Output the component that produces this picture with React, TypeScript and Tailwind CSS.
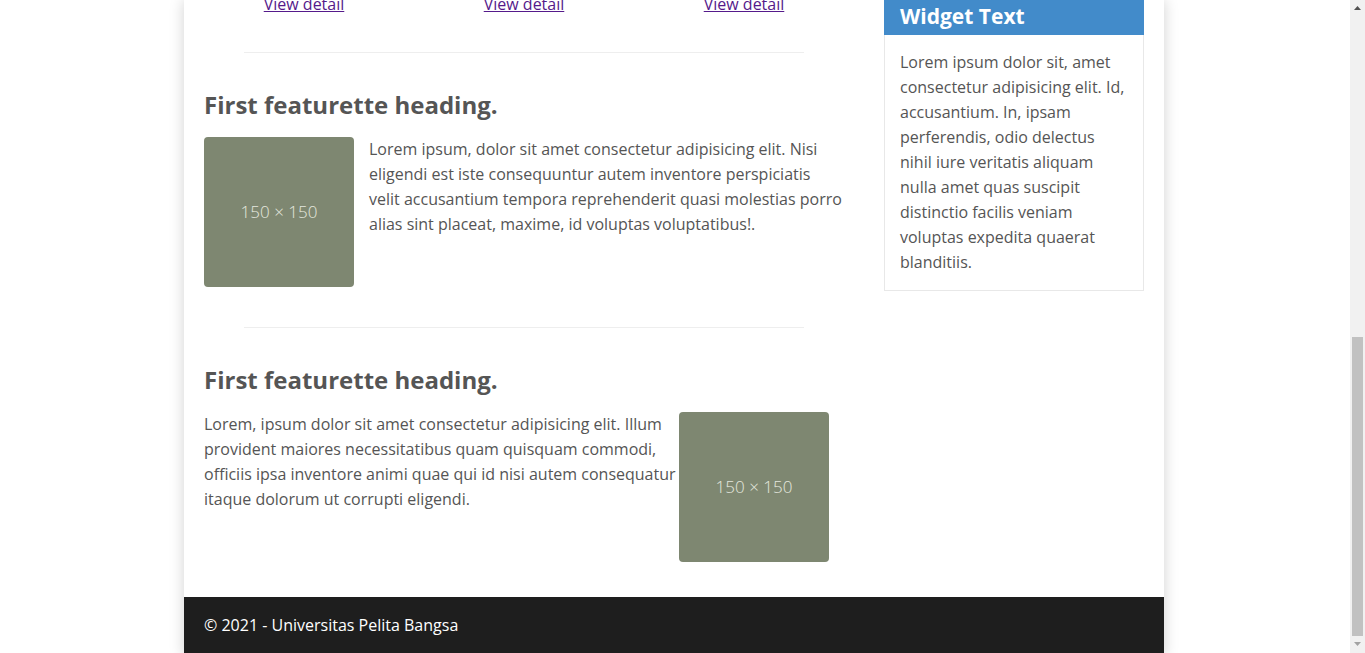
import React from "react";

const features = [
  {
    text: "Lorem ipsum, dolor sit amet consectetur adipisicing elit. Nisi eligendi est iste consequuntur autem inventore perspiciatis velit accusantium tempora reprehenderit quasi molestias porro alias sint placeat, maxime, id voluptas voluptatibus!.",
    imageLeft: true,
  },
  {
    text: "Lorem, ipsum dolor sit amet consectetur adipisicing elit. Illum provident maiores necessitatibus quam quisquam commodi, officiis ipsa inventore animi quae qui id nisi autem consequatur itaque dolorum ut corrupti eligendi.",
    imageLeft: false,
  },
];

function Placeholder({ className = "" }: { className?: string }) {
  return (
    <div className={`w-[150px] h-[150px] shrink-0 rounded-[4px] bg-[#7e8771] flex items-center justify-center pb-[2px] text-[#e4e7df] text-[17px] font-light ${className}`}>
      150 × 150
    </div>
  );
}

export default function App() {
  return (
    <div className="h-[653px] overflow-hidden flex bg-white font-['Open_Sans',sans-serif] text-[16px] leading-[25px] text-[#555]">
      <div className="flex-1 overflow-hidden pr-[2px]">
        <div className="w-[980px] mx-auto bg-white shadow-[0_0_14px_rgba(0,0,0,0.18)]">
          <div className="flex gap-[40px] px-[20px]">
            {/* Main column */}
            <main className="w-[640px] pb-[35px]">
              <div className="-mx-[10px] mt-[-8px] grid grid-cols-3 text-center">
                {[0, 1, 2].map((i) => (
                  <div key={i}>
                    <a href="#" className="text-[#551a8b] underline">View detail</a>
                  </div>
                ))}
              </div>

              {features.map((f, idx) => (
                <section key={idx} className={idx === 0 ? "mt-[35px]" : "mt-[40px]"}>
                  <hr className="mx-[40px] border-t border-[#eee]" />
                  <h2 className="mt-[37px] text-[24px] leading-[30px] font-bold text-[#555]">First featurette heading.</h2>
                  <div className="mt-[17px] flex">
                    {f.imageLeft && <Placeholder className="mr-[15px]" />}
                    <p className="flex-1">{f.text}</p>
                    {!f.imageLeft && <Placeholder className="mr-[15px]" />}
                  </div>
                </section>
              ))}
            </main>

            {/* Sidebar */}
            <aside className="w-[260px]">
              <div className="h-[35px] bg-[#428bca] px-[16px] pt-[4px] text-white text-[21px] leading-[25px] font-bold">Widget Text</div>
              <div className="border border-t-0 border-[#e8e8e8] px-[15px] pt-[15px] pb-[15px]">
                Lorem ipsum dolor sit, amet consectetur adipisicing elit. Id, accusantium. In, ipsam perferendis, odio delectus nihil iure veritatis aliquam nulla amet quas suscipit distinctio facilis veniam voluptas expedita quaerat blanditiis.
              </div>
            </aside>
          </div>

          <footer className="bg-[#1e1e1e] px-[20px] pt-[16px] pb-[20px] text-white leading-[24px]">
            © 2021 - Universitas Pelita Bangsa
          </footer>
        </div>
      </div>

      {/* Scrollbar */}
      <div className="w-[15px] shrink-0 bg-[#f1f1f1] flex flex-col items-center">
        <svg width="15" height="17" viewBox="0 0 15 17" className="shrink-0">
          <path d="M4 10 L7.5 6 L11 10 Z" fill="#505050" />
        </svg>
        <div className="flex-1 w-full" />
        <div className="w-[11px] h-[299px] bg-[#c1c1c1] shrink-0" />
        <svg width="15" height="17" viewBox="0 0 15 17" className="shrink-0">
          <path d="M4 6 L11 6 L7.5 10 Z" fill="#a3a3a3" />
        </svg>
      </div>
    </div>
  );
}
